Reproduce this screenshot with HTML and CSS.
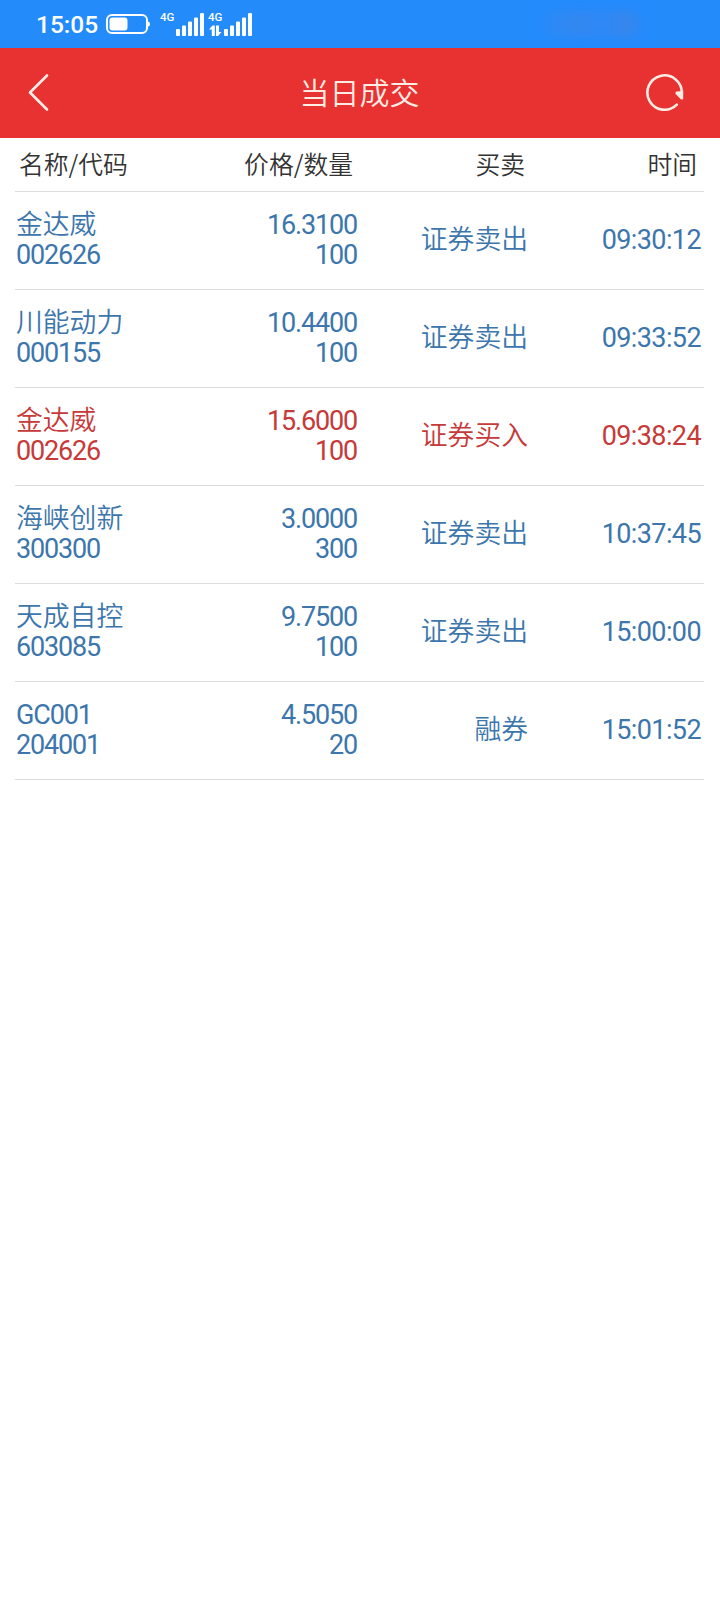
FILE: index.html
```html
<!DOCTYPE html>
<html lang="zh-CN">
<head>
  <meta charset="UTF-8">
  <meta name="viewport" content="width=device-width, initial-scale=1.0">
  <title>当日成交</title>
  <link rel="stylesheet" href="styles.css">
</head>
<body>
  <div class="status-bar">
    <span class="clock">15:05</span>
    <svg class="battery" width="44" height="20" viewBox="0 0 44 20">
      <rect x="1" y="1" width="40" height="18" rx="5" fill="none" stroke="#fff" stroke-width="2"/>
      <rect x="3.5" y="3.5" width="18" height="13" rx="3" fill="#fff"/>
      <path d="M42 7.5q2 0 2 2.5t-2 2.5z" fill="#fff"/>
    </svg>
    <svg class="signal" width="92" height="28" viewBox="0 -4 92 28">
      <g fill="#fff">
        <text class="net" x="0" y="8.2">4G</text>
        <rect x="16" y="16" width="4" height="7" rx="1"/>
        <rect x="22" y="12.5" width="4" height="10.5" rx="1"/>
        <rect x="28" y="8.5" width="4" height="14.5" rx="1"/>
        <rect x="34" y="4.5" width="4" height="18.5" rx="1"/>
        <rect x="40" y="0" width="4" height="23" rx="1"/>
        <text class="net" x="48" y="8.2">4G</text>
        <path d="M49 16.5l3.5-4h2.3V23h-3v-6.5zM56 12.5h3V19h2.5l-3.4 4H56z"/>
        <rect x="64" y="16" width="4" height="7" rx="1"/>
        <rect x="70" y="12.5" width="4" height="10.5" rx="1"/>
        <rect x="76" y="8.5" width="4" height="14.5" rx="1"/>
        <rect x="82" y="4.5" width="4" height="18.5" rx="1"/>
        <rect x="88" y="0" width="4" height="23" rx="1"/>
      </g>
    </svg>
    <div class="smudge"></div>
  </div>

  <header class="nav">
    <svg width="24" height="40" viewBox="0 0 24 40">
      <path d="M21 3.5L4 20.5l17 17" fill="none" stroke="#ffece4" stroke-width="2.6" stroke-linecap="round" stroke-linejoin="round"/>
    </svg>
    <h1>当日成交</h1>
    <svg width="40" height="40" viewBox="0 0 40 40">
      <path d="M32.8 32.7A17.2 17.2 0 1 1 37.8 21" fill="none" stroke="#ffece4" stroke-width="2.6" stroke-linecap="round"/>
      <path d="M39.2 18v9q-1.2 1.2-2.6 0l-5-5q-.8-1.8.9-2.4l4-.4z" fill="#ffece4"/>
    </svg>
  </header>

  <main class="deals">
    <div class="row head">
      <span>名称/代码</span>
      <span>价格/数量</span>
      <span>买卖</span>
      <span>时间</span>
    </div>
    <div class="row">
      <div class="name">金达威<br><b>002626</b></div>
      <div class="price"><b>16.3100</b><br><b>100</b></div>
      <div class="side">证券卖出</div>
      <div class="time"><b>09:30:12</b></div>
    </div>
    <div class="row">
      <div class="name">川能动力<br><b>000155</b></div>
      <div class="price"><b>10.4400</b><br><b>100</b></div>
      <div class="side">证券卖出</div>
      <div class="time"><b>09:33:52</b></div>
    </div>
    <div class="row buy">
      <div class="name">金达威<br><b>002626</b></div>
      <div class="price"><b>15.6000</b><br><b>100</b></div>
      <div class="side">证券买入</div>
      <div class="time"><b>09:38:24</b></div>
    </div>
    <div class="row">
      <div class="name">海峡创新<br><b>300300</b></div>
      <div class="price"><b>3.0000</b><br><b>300</b></div>
      <div class="side">证券卖出</div>
      <div class="time"><b>10:37:45</b></div>
    </div>
    <div class="row">
      <div class="name">天成自控<br><b>603085</b></div>
      <div class="price"><b>9.7500</b><br><b>100</b></div>
      <div class="side">证券卖出</div>
      <div class="time"><b>15:00:00</b></div>
    </div>
    <div class="row">
      <div class="name"><b>GC001</b><br><b>204001</b></div>
      <div class="price"><b>4.5050</b><br><b>20</b></div>
      <div class="side">融券</div>
      <div class="time"><b>15:01:52</b></div>
    </div>
  </main>
</body>
</html>
```
FILE: styles.css
```css
* {
  box-sizing: border-box;
}

body {
  margin: 0;
  min-height: 1600px;
  background: #fff;
  font-family: "Noto Sans CJK SC", sans-serif;
}

/* 状态栏 */
.status-bar {
  display: flex;
  align-items: center;
  height: 48px;
  padding-left: 36px;
  background: #248bfb;
}

.clock {
  width: 70px;
  padding-top: 2px;
  color: #fff;
  font: 500 24.5px/48px Roboto, sans-serif;
}

.signal {
  margin: 0 0 3px 10px;
}

.net {
  font: 500 11.5px Roboto, sans-serif;
}

.smudge {
  width: 98px;
  height: 26px;
  margin-left: 292px;
  border-radius: 13px;
  background: linear-gradient(90deg, #2a8af8, #3487f0 40%, #2d88f6 60%, #3886ec 85%, #2a8af8);
  filter: blur(4px);
}

/* 标题栏 */
.nav {
  display: flex;
  align-items: center;
  justify-content: space-between;
  height: 90px;
  padding: 0 36px 2px 26px;
  background: #e83131;
}

.nav h1 {
  margin: 0 0 2px 25px;
  color: #ffece4;
  font-size: 30px;
  font-weight: 350;
}

/* 成交列表 */
.deals {
  padding: 0 16px 0 15px;
}

.row {
  display: grid;
  grid-template-columns: 171px 170px 171px 1fr;
  align-items: center;
  height: 98px;
  padding: 0 3px 6px 1px;
  border-bottom: 1px solid #dcdcdc;
  color: #3c76ac;
  font-size: 26.8px;
  font-weight: 350;
  line-height: 30px;
  text-align: right;
}

.row > :first-child {
  text-align: left;
}

.row b {
  font-family: Roboto, sans-serif;
  font-size: 27px;
  font-weight: 450;
  line-height: 20px;
  letter-spacing: -1.15px;
}

.row .time b {
  letter-spacing: -0.6px;
}

.buy {
  color: #c63a3a;
}

.head {
  grid-template-columns: 164px 170px 172px 1fr;
  height: 54px;
  padding: 0 7px 4px 4px;
  color: #333;
  font-size: 24.8px;
}
```
